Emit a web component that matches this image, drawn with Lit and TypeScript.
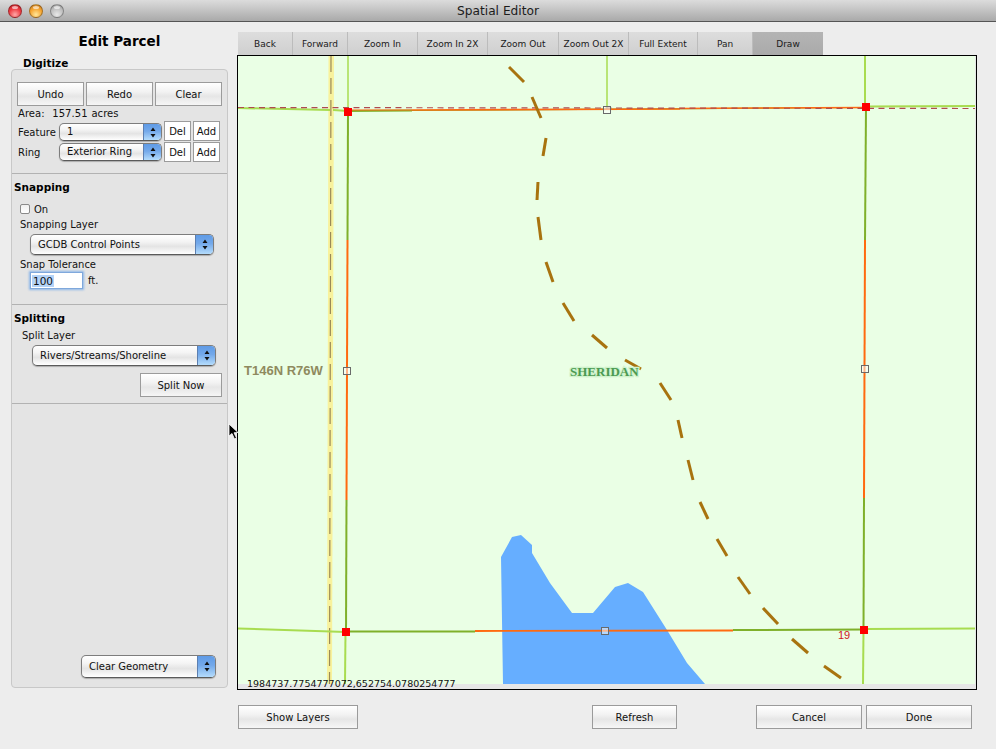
import { LitElement, html, css, svg } from "lit";
import { customElement } from "lit/decorators.js";

const DASHES: number[][] = [
  [509,67,524,82],[532,97,541,118],[546,138,543,156],[538,182,537,200],[538,217,541,240],
  [546,262,553,282],[563,303,574,321],[592,335,607,348],[625,360,641,369],[660,383,671,400],
  [678,420,682,438],[688,460,693,480],[700,502,708,519],[717,539,727,556],[738,577,750,594],
  [763,608,778,624],[792,639,808,653],[824,666,841,678],
];
const TABS = ["Back","Forward","Zoom In","Zoom In 2X","Zoom Out","Zoom Out 2X","Full Extent","Pan","Draw"];
const TABW = [55,55,70,70,71,70,69,55,70];

const GREEN = "#a8dc50", OLIVE = "#7fb02a", ORANGE = "#ff6a10";

function seg(x1:number,y1:number,x2:number,y2:number,c:string,w=2){
  return svg`<line x1=${x1} y1=${y1} x2=${x2} y2=${y2} stroke=${c} stroke-width=${w}/>`;
}
function redSq(x:number,y:number){ return svg`<rect x=${x-4} y=${y-4} width="8" height="8" fill="#ff0000"/>`; }
function hollow(x:number,y:number){ return svg`<rect x=${x-3.5} y=${y-3.5} width="7" height="7" fill="#ffffff" fill-opacity="0.5" stroke="#6a6a6a" stroke-width="1"/>`; }

@customElement("app-select")
class AppSelect extends LitElement {
  static properties = { label: {} };
  label = "";
  static styles = css`
    :host { display: block; }
    .sel { display:flex; height:100%; box-sizing:border-box; border:1px solid #7d7d7d; border-bottom-color:#5a5a5a; border-radius:5px; overflow:hidden;
      background:linear-gradient(#ffffff,#f4f4f4 35%,#e4e4e4 60%,#ffffff); box-shadow:0 1px 1px rgba(0,0,0,.25); }
    .t { flex:1; padding-left:7px; font:10px/1 "DejaVu Sans",sans-serif; color:#111; display:flex; align-items:center; white-space:nowrap; overflow:hidden; }
    .a { width:17px; border-left:1px solid #5c7fb0; background:linear-gradient(#5f9be6,#74a9ea 45%,#b4dcfc); display:flex; align-items:center; justify-content:center; }
    svg { display:block; }
  `;
  render(){
    return html`<div class="sel"><div class="t">${this.label}</div><div class="a">
      <svg width="6" height="11" viewBox="0 0 6 11"><path d="M3 0.5 L5.5 4 H0.5Z M3 10.5 L5.5 7 H0.5Z" fill="#111"/></svg>
    </div></div>`;
  }
}

@customElement("app-root")
export class AppRoot extends LitElement {
  static styles = css`
    :host { display:block; width:996px; height:749px; position:relative; overflow:hidden; background:#ededed; font:10px "DejaVu Sans",sans-serif; color:#111; }
    .titlebar { height:21px; border-bottom:1px solid #555; background:linear-gradient(#dcdcdc,#a9a9a9); display:flex; align-items:center; position:relative; justify-content:center; font-size:12.2px; color:#1c1c1c; }
    .lights { position:absolute; left:8px; top:4px; display:flex; gap:7px; }
    .light { width:14px; height:14px; border-radius:50%; box-sizing:border-box; border:1px solid rgba(0,0,0,.3); position:relative; }
    .light::after { content:""; position:absolute; left:3px; top:1px; width:6px; height:3px; border-radius:50%; background:rgba(255,255,255,.6); }
    .r { background:radial-gradient(circle at 50% 80%,#ffa8a8,#ee3a40 55%,#b82026); }
    .o { background:radial-gradient(circle at 50% 80%,#ffe79a,#f5a42f 55%,#c47a20); }
    .g { background:radial-gradient(circle at 50% 80%,#e8e8e8,#bcbcbc 60%,#9a9a9a); }
    .main { display:flex; padding-left:11px; }
    .side { width:217px; display:flex; flex-direction:column; }
    h1 { margin:11px 0 0; height:16px; font:bold 13.5px/16px "DejaVu Sans",sans-serif; text-align:center; color:#000; }
    .digi { margin:8px 0 -1px 12px; height:13px; font:bold 10.5px/13px "DejaVu Sans",sans-serif; color:#000; }
    .panel { height:619px; box-sizing:border-box; border:1px solid #c8c8c8; border-radius:4px; background:#e4e4e4; display:flex; flex-direction:column; }
    .sec { border-bottom:1px solid #b2b2b2; box-sizing:border-box; display:flex; flex-direction:column; }
    .s1 { height:104px; padding:12px 5px 0 5px; }
    .s2 { height:131px; padding:7px 0 0 2px; }
    .s3 { height:99px; padding:7px 0 0 2px; }
    .s4 { flex:1; display:flex; justify-content:flex-end; align-items:flex-end; padding:0 11px 9px 0; }
    .btn { box-sizing:border-box; border:1px solid #9b9b9b; padding-top:1px; background:linear-gradient(#ffffff,#f2f2f2 40%,#e6e6e6 60%,#f6f6f6); display:flex; align-items:center; justify-content:center; font:10px/1 "DejaVu Sans",sans-serif; color:#111; }
    .row3 { display:flex; gap:2px; }
    .row3 .btn { width:67px; height:24px; }
    .area { margin:2px 0 0 1px; height:12px; line-height:12px; white-space:pre; word-spacing:0.6px; letter-spacing:0.05px; }
    .frow { display:flex; align-items:center; height:20px; margin-bottom:1px; margin-top:1px; }
    .frow + .frow { margin-top:0; }
    .frow .lbl { width:42px; padding-left:1px; box-sizing:border-box; }
    .frow:not(.frow + .frow) .lbl { padding-top:2px; }
    .frow app-select { width:103px; height:18px; }
    .frow:not(.frow + .frow) app-select { margin-top:2px; }
    .mini { width:27px; height:20px; margin-left:2px; background:#fff; }
    .title { font:bold 10.5px/13px "DejaVu Sans",sans-serif; color:#000; height:13px; }
    .on { display:flex; align-items:center; gap:4px; margin:8px 0 0 6px; height:14px; }
    .cb { width:10px; height:10px; box-sizing:border-box; border:1px solid #8a8a8a; border-radius:2px; background:linear-gradient(#f0f0f0,#fff); }
    .lab { margin-left:6px; height:13px; line-height:13px; }
    .tolrow { display:flex; align-items:center; margin:1px 0 0 16px; height:17px; }
    .inp { width:53px; height:17px; box-sizing:border-box; border:1px solid #7fa8dc; box-shadow:0 0 2px 1px #8db6e8; background:#fff; display:flex; align-items:center; padding-left:1px; font-size:10.5px; }
    .inp span { background:#b4d3f7; padding:0 1px; line-height:12px; }
    .ft { margin-left:5px; }
    .right { margin-left:9px; padding-top:10px; }
    .tabs { display:flex; margin-left:1px; height:23px; }
    .tab { box-sizing:border-box; display:flex; align-items:center; justify-content:center; border-right:1px solid #bcbcbc; background:linear-gradient(#dddddd,#cfcfcf); font:9px/1 "DejaVu Sans",sans-serif; color:#1a1a1a; padding-top:2px; white-space:nowrap; }
    .tab.on-tab { background:linear-gradient(#b4b4b4,#aaaaaa); border-right:none; }
    .map { width:740px; height:635px; box-sizing:border-box; border:1px solid #000; background:#e6e6e6; }
    .map svg { display:block; }
    .bottom { display:flex; margin-top:15px; padding-left:1px; }
    .bottom .btn { height:24px; }
    .cursor { position:absolute; left:228px; top:423px; }
  `;

  render(){
    return html`
      <div class="titlebar">
        <div class="lights"><div class="light r"></div><div class="light o"></div><div class="light g"></div></div>
        Spatial Editor
      </div>
      <div class="main">
        <div class="side">
          <h1>Edit Parcel</h1>
          <div class="digi">Digitize</div>
          <div class="panel">
            <div class="sec s1">
              <div class="row3"><div class="btn">Undo</div><div class="btn">Redo</div><div class="btn">Clear</div></div>
              <div class="area">Area:  157.51 acres</div>
              <div class="frow"><div class="lbl">Feature</div><app-select label="1"></app-select><div class="btn mini">Del</div><div class="btn mini">Add</div></div>
              <div class="frow"><div class="lbl">Ring</div><app-select label="Exterior Ring"></app-select><div class="btn mini">Del</div><div class="btn mini">Add</div></div>
            </div>
            <div class="sec s2">
              <div class="title">Snapping</div>
              <div class="on"><div class="cb"></div>On</div>
              <div class="lab" style="margin-top:2px">Snapping Layer</div>
              <app-select label="GCDB Control Points" style="width:184px;height:21px;margin:3px 0 0 16px"></app-select>
              <div class="lab" style="margin-top:3px">Snap Tolerance</div>
              <div class="tolrow"><div class="inp"><span>100</span></div><div class="ft">ft.</div></div>
            </div>
            <div class="sec s3">
              <div class="title">Splitting</div>
              <div class="lab" style="margin:4px 0 0 8px">Split Layer</div>
              <app-select label="Rivers/Streams/Shoreline" style="width:184px;height:21px;margin:3px 0 0 18px"></app-select>
              <div class="btn" style="width:82px;height:24px;margin:7px 0 0 126px">Split Now</div>
            </div>
            <div class="s4"><app-select label="Clear Geometry" style="width:135px;height:23px"></app-select></div>
          </div>
        </div>
        <div class="right">
          <div class="tabs">
            ${TABS.map((t,i)=>html`<div class="tab ${t==="Draw"?"on-tab":""}" style="width:${TABW[i]}px">${t}</div>`)}
          </div>
          <div class="map">${this.mapSvg()}</div>
          <div class="bottom">
            <div class="btn" style="width:120px">Show Layers</div>
            <div class="btn" style="width:85px;margin-left:234px">Refresh</div>
            <div class="btn" style="width:106px;margin-left:79px">Cancel</div>
            <div class="btn" style="width:106px;margin-left:4px">Done</div>
          </div>
        </div>
      </div>
      <svg class="cursor" width="12" height="18" viewBox="0 0 12 18"><path d="M1 1 L1 13 L4 10.5 L6.5 16 L8.5 15 L6 9.8 L10 9.5 Z" fill="#000" stroke="#fff" stroke-width="0.8"/></svg>
    `;
  }

  mapSvg(){
    return svg`<svg xmlns="http://www.w3.org/2000/svg" width="738" height="633" viewBox="238 56 738 633">
      <rect x="238" y="56" width="737" height="628" fill="#eaffe5"/>
      <polygon points="501,557 512,537 521,535 532,545 532,553 550,583 572,613 593,613 615,587 628,583 643,592 667,630 687,663 705,684 503,684" fill="#66aeff"/>
      <polygon points="328.5,56 334,56 332,684 327,684" fill="#f8f29c"/>
      <line x1="331" y1="56" x2="329.5" y2="684" stroke="#9a8a58" stroke-width="1.2" stroke-dasharray="16 6"/>
      ${seg(238,108,330,110,GREEN)}
      ${seg(333,110,348,111,GREEN)}
      ${seg(348,56,348,110,GREEN,1.5)}
      ${seg(607,56,607,110,GREEN,1.5)}
      ${seg(865,56,865,107,GREEN)}
      ${seg(348,111,412,110.5,OLIVE)}
      ${seg(412,110.5,866,107.5,OLIVE,1.2)}
      ${seg(350,110,412,110,ORANGE,1)}
      ${seg(412,110,680,109,ORANGE,1.6)}
      ${seg(680,108.5,866,107.5,ORANGE,1.6)}
      ${seg(866,106.5,975,106,GREEN)}
      <line x1="238" y1="107.5" x2="975" y2="108.5" stroke="#b04a50" stroke-width="1.2" stroke-dasharray="6 4.5"/>
      ${seg(348,111,347.5,240,OLIVE)}
      ${seg(347.5,240,346.5,500,ORANGE)}
      ${seg(346.5,500,346,632,OLIVE)}
      ${seg(345.5,632,345,684,GREEN)}
      ${seg(866,107,865,240,OLIVE)}
      ${seg(865,240,864,498,ORANGE)}
      ${seg(864,498,863.5,630,OLIVE)}
      ${seg(863.5,630,863,684,GREEN)}
      ${seg(238,628.5,346,632,GREEN)}
      ${seg(346,631.5,475,631.5,OLIVE)}
      ${seg(475,631,733,630.5,ORANGE,1.8)}
      ${seg(733,630,864,629.5,OLIVE)}
      ${seg(864,629,975,628.5,GREEN)}
      ${DASHES.map(d=>svg`<line x1=${d[0]} y1=${d[1]} x2=${d[2]} y2=${d[3]} stroke="#a8730f" stroke-width="3"/>`)}
      ${redSq(348,112)}${redSq(866,107)}${redSq(346,632)}${redSq(864,630)}
      ${hollow(607,110)}${hollow(347,371)}${hollow(865,369)}${hollow(605,631)}
      <text x="244" y="374.5" font-family="Liberation Sans" font-weight="700" font-size="13" fill="#8f8a5e">T146N R76W</text>
      <text x="570" y="375.5" font-family="Liberation Serif" font-weight="700" font-size="13" fill="#4b9a52" stroke="#cff2cc" stroke-width="2.5" paint-order="stroke">SHERIDAN</text>
      <text x="838" y="639" font-family="Liberation Sans" font-size="11" fill="#d01820">19</text>
      <text x="247" y="687" font-family="DejaVu Sans" font-size="9.5" fill="#111">1984737.7754777072,652754.0780254777</text>
    </svg>`;
  }
}
void AppSelect;
